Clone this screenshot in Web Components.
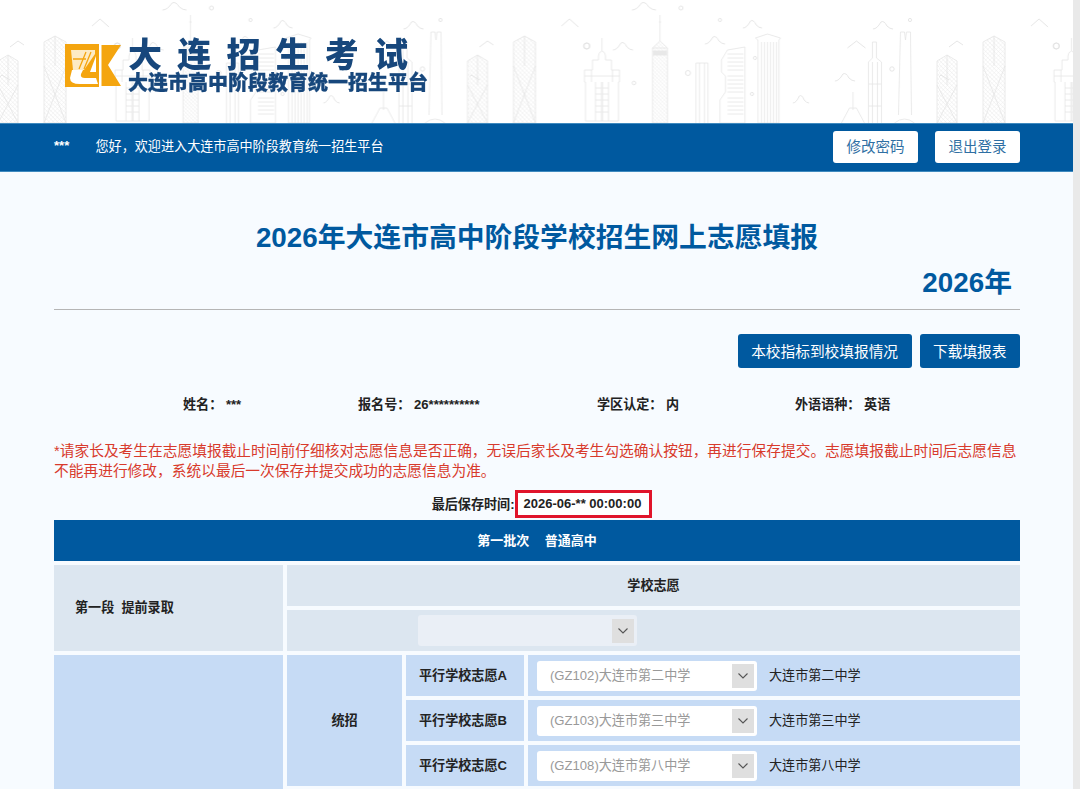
<!DOCTYPE html>
<html lang="zh"><head><meta charset="utf-8"><title>大连招生考试</title>
<style>
html,body{margin:0;height:789px;overflow:hidden;background:#f7fbff}
body{font-family:"Liberation Sans","Noto Sans CJK SC",sans-serif;color:#222}
</style></head><body>
<x-page>
  <x-banner></x-banner>
  <x-nav who="***" greet="您好，欢迎进入大连市高中阶段教育统一招生平台"></x-nav>
  <x-form></x-form>
</x-page>
<script>
const def=(n,html)=>customElements.define(n,class extends HTMLElement{
  connectedCallback(){if(this.shadowRoot)return;const r=this.attachShadow({mode:'open'});
    r.innerHTML=typeof html==='function'?html(this):html;}
});
def('x-page',`<style>:host{display:flex;width:1080px;height:789px;overflow:hidden}
.m{width:1073px;flex:none;display:flex;flex-direction:column}
.s{flex:1;background:#e9e9e9}</style><div class="m"><slot></slot></div><div class="s"></div>`);

function hatch(id,step,ang){return `<pattern id="${id}" width="${step}" height="${step}" patternUnits="userSpaceOnUse" patternTransform="rotate(${ang})"><path d="M0 0H${step}" stroke="#e0e0e0" stroke-width=".6"/><path d="M0 0V${step}" stroke="#e9e9e9" stroke-width=".5"/></pattern>`;}
const P=469.5;
const cloud=(x,y,w)=>`M${x} ${y+4}Q${x+w*.2} ${y+4} ${x+w*.4} ${y-3}Q${x+w*.55} ${y-5} ${x+w*.7} ${y+1}Q${x+w*.85} ${y+4} ${x+w} ${y+4}`;
const clouds=[[632,6,24],[613,46,20],[705,40,20],[743,24,19],[793,99,16],[873,25,20],[947,44,21],[1007,24,21],[1017,78,20],[835,77,20]].map(c=>cloud(c[0]-P,c[1],c[2])).join('');
const dots=[[587,46,3],[681,8,2],[720,20,1.6],[688,73,2.5],[634,83,1.8],[755,58,1.6],[752,94,1.6],[910,20,1.6],[892,69,2.2],[957,3,2.4],[972,94,2.2],[1013,70,1.8],[1056-P,46,3]]
  .map(d=>`<circle cx="${d[0]-(d[0]>540?P:0)}" cy="${d[1]}" r="${d[2]}"/>`).join('');
const hatched=(x,w,top)=>`<path d="M${x} 123V${top+6}L${x+w/2} ${top}L${x+w} ${top+6}V123Z" fill="url(#h1)"/><path d="M${x} ${top+30}L${x+w} 123M${x+w} ${top+30}L${x} 123M${x+w/2} ${top}V${top+30}" stroke="#e4e4e4"/>`;
const tile=`
<g fill="none" stroke="#e4e4e4" stroke-width=".8">
  ${hatched(-2,20,55)}${hatched(467.5,20,55)}${hatched(44,22,36)}
  <path d="M116 121V82H115V70H123V60H129V56Q129 52 132.5 51Q136 52 136 56V60H142V70H150V82H149V121"/>
  <path d="M132.5 51V38M115 76H150M122 70V82M143 70V82"/>
  <path d="M116 121H149M126 82V121M132 82V121M133 82V121M139 82V121"/>
  <path d="M126 88H132M126 94H132M126 100H132M126 106H132M126 112H132M133 88H139M133 94H139M133 100H139M133 106H139M133 112H139"/>
  <path d="M183 123V48L190.5 41L198 48V123Z" fill="url(#h2)"/>
  <path d="M190.5 41V15M189.5 22H191.5M183 48H198"/><path d="M183.5 53H197.5" stroke-width="5" stroke="#e8e8e8"/>
  <path d="M226.5 123V63H238.5V123M230 63V123M235 63V123"/>
  <path d="M250.5 123V100L256 92V76L252 72V60L258 50L275.5 47V123Z"/>
  <path d="M258 54H274M258 58H274M258 62H274M258 66H274M258 70H274M258 76H274M258 80H274M258 84H274M258 88H274M258 92H274M258 98H274M258 102H274M258 106H274M258 110H274M258 114H274"/>
  <path d="M288.5 123V40L286 38L298 34L311 38L309.5 40V123Z"/>
  <path d="M292 42V123M295 42V123M298 42V123M301 42V123M304 42V123M307 42V123"/>
  <path d="M383.5 92V110M372 123L380 108H387L395 123"/>
  <path d="M399 123V62L403 58V42H407V58L412 62V123M399 84H412M399 106H412M403 62V123M408 62V123"/>
  <path d="M429 115L431 32H435L436 40L437 32H441L442 115M425 123Q435 115 445 123"/>
</g>
<g fill="none" stroke="#e2e2e2" stroke-width=".9">
  <path d="${clouds}"/>${dots}
  <path d="M10 47l8-6 6 4M92 26l8-7 9 8M-6 82l8-7 8 5M378 48l9-7 9 7"/>
</g>`;
def('x-banner',`<style>:host{display:block;height:123px;position:relative;background:#fff;overflow:hidden;flex:none}
svg.bg{position:absolute;inset:0;width:100%;height:100%}
.brand{position:relative;display:flex;align-items:flex-start;height:100%;padding:40px 0 0 60px;gap:3px;box-sizing:border-box}
.t{display:flex;flex-direction:column;color:#17477c;font-weight:900;margin-top:-2.5px;text-shadow:0 0 3px #fff;filter:blur(.25px)}
.a{font-size:34px;line-height:34px;letter-spacing:15.2px;white-space:nowrap}
.b{font-size:20px;line-height:20px;white-space:nowrap;margin-top:1px;-webkit-text-stroke:.3px #17477c}
.logo{flex:none;filter:blur(.3px)}
</style>
<svg class="bg" xmlns="http://www.w3.org/2000/svg"><defs>${hatch('h1',3,45)}${hatch('h2',2.6,45)}
<pattern id="tile" x="0" y="0" width="${P}" height="123" patternUnits="userSpaceOnUse">${tile}</pattern></defs>
<rect width="100%" height="100%" fill="url(#tile)"/></svg>
<div class="brand">
<svg class="logo" width="65" height="52" viewBox="0 0 65 52">
  <path fill="#f4a50f" d="M5 4H39V47H5Z"/>
  <path fill="#f4a50f" d="M41 5H61L48 25L61 46H41Z"/>
  <path fill="#fff" d="M39 4H41.5V47H39Z"/>
  <path fill="#fdebc4" d="M11 10H35V14L24 30H13Z"/>
  <path fill="#fff" d="M12 30L10 38Q10 44 20 44H38L36 38H25Q20 38 21 34L23 30Z"/>
  <path fill="#fff" d="M36 16L30 32H36Z"/>
  <path fill="none" stroke="#f4a50f" stroke-width="1.3" d="M19 29L26 12M24 29L31 12M13 19H26"/>
</svg>
<div class="t"><div class="a">大连招生考试</div><div class="b">大连市高中阶段教育统一招生平台</div></div>
</div>`);
def('x-nav',h=>`<style>:host{display:flex;align-items:center;height:49px;background:#00599f;color:#fff;padding:0 53px 0 54px;flex:none;box-sizing:border-box;width:1073px;font-size:13.1px;border-top:1px solid #3f8abf;border-bottom:1px solid #3f8abf}
.w{font-weight:700;width:41.5px;padding-bottom:5px}.g{flex:1;padding-bottom:5px}
.btn{display:flex;align-items:center;justify-content:center;height:32px;box-sizing:border-box;padding-bottom:3px;margin-bottom:2px;background:#fff;border-radius:3px;color:#2f6fa3;font-size:14.5px;margin-left:17px;width:85px}
</style><span class="w">${h.getAttribute('who')}</span><span class="g">${h.getAttribute('greet')}</span>
<span class="btn">修改密码</span><span class="btn">退出登录</span>`);
def('x-select',h=>{const v=h.getAttribute('value')||'';const e=h.hasAttribute('empty');return `<style>
:host{display:flex;align-items:center;height:${e?31:30}px;width:${e?219:220}px;box-sizing:border-box;background:${e?'#eaeff6':'#fff'};border-radius:3px;padding:0 3px 0 13px;font-size:13.1px;color:#999}
span{flex:1;white-space:nowrap;padding-bottom:3px}
i{display:flex;align-items:center;justify-content:center;width:22px;height:24px;background:#dfdfdf}
</style><span>${v}</span><i><svg width="12" height="8" viewBox="0 0 12 8"><path d="M1.5 1.5L6 6L10.5 1.5" fill="none" stroke="#555" stroke-width="1.1"/></svg></i>`});
def('x-btn',`<style>:host{display:flex;align-items:center;justify-content:center;height:34px;background:#00599f;color:#fff;border-radius:3px;font-size:14.7px;box-sizing:border-box;padding:0 13.5px 2px}</style><slot></slot>`);
def('x-cell',h=>`<style>:host{display:flex;align-items:center;justify-content:${h.getAttribute('j')||'center'};background:${h.getAttribute('c')==='a'?'#c6dbf5':'#dce6f0'};font-size:13.1px;font-weight:700;color:#222;min-width:0;box-sizing:border-box;padding-bottom:3px}</style><slot></slot>`);
def('x-info',h=>`<style>:host{display:block;font-size:13.1px;font-weight:700;padding-left:${h.getAttribute('p')}px;color:#222;white-space:nowrap}</style><slot></slot>`);
def('x-form',`<style>:host{display:block;padding:0 53px 0 54px;width:966px;flex:none}
h1{margin:0;padding-top:49px;height:34px;line-height:34px;font-size:27.8px;font-weight:700;color:#00599f;text-align:center;white-space:nowrap}
h2{margin:12px 8px 0 0;height:32px;line-height:32px;font-size:27.8px;font-weight:700;color:#00599f;text-align:right}
hr{margin:10px 0 0;border:0;border-top:1px solid #b5b5b5}
.acts{display:flex;justify-content:flex-end;gap:8px;margin-top:24px}
.info{display:grid;grid-template-columns:175px 239px 198px 1fr;margin-top:28px;height:18px;line-height:18px}
.note{margin:27px 0 0;color:#d83a2c;font-size:14.73px;line-height:20px;height:40px}
.saved{display:flex;justify-content:center;align-items:center;height:28px;margin:9px 0 0;padding-left:10px;font-size:13.1px;font-weight:700;white-space:nowrap;color:#222}
.saved>span{padding-bottom:2px}
.box{display:flex;align-items:center;height:28px;box-sizing:border-box;border:3px solid #e0142a;background:#fff;padding:0 8px 2px 6px!important;font-size:13px}
.bar{margin-top:2px;height:41px;box-sizing:border-box;padding-bottom:3px;background:#00599f;color:#fff;display:flex;align-items:center;justify-content:center;font-weight:700;font-size:13px;word-spacing:12px}
.g{display:grid;margin-top:4px;gap:4px;grid-template-columns:229px 115px 118px 492px;grid-auto-rows:41px}
.sel{padding-left:9px;gap:12px;font-weight:400;padding-bottom:0}
.sel span{padding-bottom:3px}
.s1{grid-column:2/5}
.lead{grid-row:3/span 4}.tz{grid-row:3/span 3}
.l{padding-left:13px}
</style>
<h1>2026年大连市高中阶段学校招生网上志愿填报</h1>
<h2>2026年</h2><hr>
<div class="acts"><x-btn>本校指标到校填报情况</x-btn><x-btn>下载填报表</x-btn></div>
<div class="info">
 <x-info p="129">姓名： ***</x-info><x-info p="129">报名号： 26**********</x-info><x-info p="129">学区认定： 内</x-info><x-info p="129">外语语种： 英语</x-info>
</div>
<p class="note">*请家长及考生在志愿填报截止时间前仔细核对志愿信息是否正确，无误后家长及考生勾选确认按钮，再进行保存提交。志愿填报截止时间后志愿信息不能再进行修改，系统以最后一次保存并提交成功的志愿信息为准。</p>
<div class="saved"><span>最后保存时间:</span><span class="box">2026-06-** 00:00:00</span></div>
<div class="bar">第一批次 普通高中</div>
<div class="g">
 <x-cell j="flex-start" style="grid-row:1/span 2;padding-left:21px;word-spacing:3.5px">第一段 提前录取</x-cell>
 <x-cell class="s1">学校志愿</x-cell>
 <x-cell class="s1" j="flex-start" style="padding:0 0 0 131px"><x-select empty></x-select></x-cell>
 <x-cell c="a" class="lead"></x-cell>
 <x-cell c="a" class="tz">统招</x-cell>
 <x-cell c="a" j="flex-start" class="l">平行学校志愿A</x-cell><x-cell c="a" j="flex-start" class="sel"><x-select value="(GZ102)大连市第二中学"></x-select><span>大连市第二中学</span></x-cell>
 <x-cell c="a" j="flex-start" class="l">平行学校志愿B</x-cell><x-cell c="a" j="flex-start" class="sel"><x-select value="(GZ103)大连市第三中学"></x-select><span>大连市第三中学</span></x-cell>
 <x-cell c="a" j="flex-start" class="l">平行学校志愿C</x-cell><x-cell c="a" j="flex-start" class="sel"><x-select value="(GZ108)大连市第八中学"></x-select><span>大连市第八中学</span></x-cell>
</div>`);
</script>
</body></html>
